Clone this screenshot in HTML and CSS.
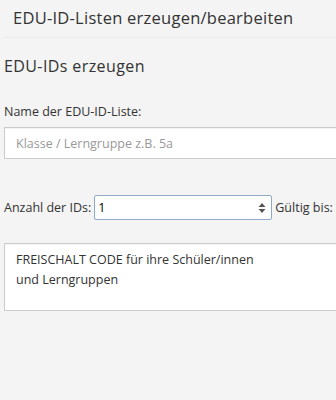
FILE: index.html
```html
<!DOCTYPE html>
<html lang="de">
<head>
    <meta charset="UTF-8">
    <meta name="viewport" content="width=device-width, initial-scale=1.0">
    <title>EDU-ID-Listen</title>
    <link rel="stylesheet" href="styles.css">
</head>
<body>
    <div class="page-header">
        <h1>EDU-ID-Listen erzeugen/bearbeiten</h1>
    </div>

    <div class="content">
        <h2>EDU-IDs erzeugen</h2>

        <label class="field-label" for="listName">Name der EDU-ID-Liste:</label>
        <input class="text-input" id="listName" type="text" placeholder="Klasse / Lerngruppe z.B. 5a">

        <div class="count-row">
            <label for="idCount">Anzahl der IDs:</label>
            <div class="number-box">
                <input id="idCount" type="text" value="1">
                <span class="spinner">
                    <svg width="8" height="12" viewBox="0 0 8 12"><path d="M4 1 L7.5 5 L0.5 5 Z M4 11 L7.5 7 L0.5 7 Z" fill="#555"/></svg>
                </span>
            </div>
            <label>Gültig bis:</label>
        </div>

        <div class="code-box">FREISCHALT CODE für ihre Schüler/innen<br>und Lerngruppen</div>
    </div>
</body>
</html>
```

FILE: styles.css
```css
body {
    font-family: "Open Sans", "Noto Sans", sans-serif;
    background-color: #f4f4f4;
    color: #333;
    margin: 0;
    overflow: hidden;
}

.page-header {
    margin-left: 4px;
    padding: 8px 0 9px 9px;
    border-bottom: 1px solid #ebebeb;
}

h1 {
    font-size: 16.5px;
    font-weight: normal;
    letter-spacing: 0.25px;
    margin: 0;
    line-height: 20px;
}

.content {
    padding: 0 0 0 4px;
}

h2 {
    font-size: 16px;
    font-weight: normal;
    letter-spacing: 0.4px;
    margin: 18px 0 0 0;
    line-height: 20px;
}

.field-label {
    display: block;
    font-size: 12.5px;
    margin-top: 27px;
    line-height: 18px;
}

.text-input {
    display: block;
    box-sizing: border-box;
    width: 340px;
    height: 32px;
    margin-top: 6px;
    padding: 0 11px;
    border: 1px solid #ccc;
    background-color: #fff;
    font-family: inherit;
    font-size: 12.5px;
    box-shadow: inset 0 1px 1px rgba(0, 0, 0, 0.05);
}

.text-input::placeholder {
    color: #999;
}

.count-row {
    display: flex;
    align-items: center;
    gap: 3px;
    margin-top: 36px;
    font-size: 12.5px;
}

.number-box {
    display: flex;
    align-items: center;
    box-sizing: border-box;
    width: 178px;
    height: 25px;
    border: 1px solid #8eaacb;
    background-color: #fff;
    border-radius: 2px;
}

.number-box input {
    flex: 1;
    min-width: 0;
    border: none;
    outline: none;
    padding: 0 3px;
    font-family: inherit;
    font-size: 12.5px;
    color: #000;
    background: transparent;
}

.spinner {
    display: flex;
    width: 18px;
    justify-content: center;
}

.code-box {
    box-sizing: border-box;
    width: 340px;
    height: 68px;
    margin-top: 23px;
    padding: 6px 11px;
    border: 1px solid #ccc;
    background-color: #fff;
    font-size: 12.5px;
    line-height: 20px;
    box-shadow: inset 0 1px 1px rgba(0, 0, 0, 0.05);
}
```
